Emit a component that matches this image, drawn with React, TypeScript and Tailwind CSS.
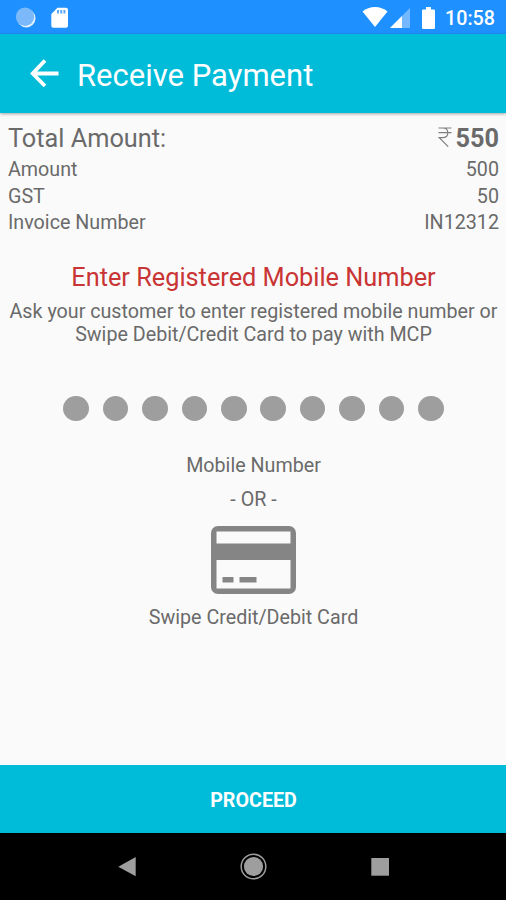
const details = [
  { label: 'Amount', value: '500' },
  { label: 'GST', value: '50' },
  { label: 'Invoice Number', value: 'IN12312' }
]

const MOBILE_LENGTH = 10

function StatusBar() {
  return (
    <div className="h-[34px] shrink-0 bg-[#1e90ff] flex items-center justify-between pl-[15px] pr-[11px]">
      <div className="flex items-center gap-[15px]">
        <svg width="21" height="21" viewBox="0 0 21 21">
          <circle cx="11.3" cy="11.3" r="9.2" fill="#e3f1ff" />
          <circle cx="10" cy="9.8" r="9.2" fill="#7bb9fa" />
        </svg>
        <svg width="18" height="21" viewBox="0 0 18 21">
          <path d="M6.5 0.8H15a2 2 0 0 1 2 2v16a2 2 0 0 1-2 2H2.300a2 2 0 0 1-2-2V7z" fill="#fff" />
          <path d="M6 3h2v3.500H6zM9.200 3h2v3.500h-2zM12.400 3h2v3.500h-2z" fill="#5ba8f5" />
        </svg>
      </div>
      <div className="flex items-center pt-[1px]">
        <svg width="26" height="21" viewBox="0 0 26 21">
          <path d="M13 20 0.500 4.500C4 1.500 8.200 0 13 0s9 1.500 12.500 4.500z" fill="#fff" />
        </svg>
        <svg className="ml-[2px]" width="20" height="20" viewBox="0 0 20 20">
          <path d="M0 20 20 0v20z" fill="#74b9ff" />
          <path d="M0 20 12 8v12z" fill="#fff" />
        </svg>
        <svg className="ml-[12px]" width="13" height="22" viewBox="0 0 13 22">
          <path d="M4 0h5v2.500h2.700A1.300 1.300 0 0 1 13 3.800v16.900a1.300 1.300 0 0 1-1.300 1.300H1.300A1.300 1.300 0 0 1 0 20.700V3.800a1.300 1.300 0 0 1 1.300-1.300H4z" fill="#fff" />
        </svg>
        <span className="ml-[10px] pt-[2px] text-[19.7px] leading-[23px] font-medium text-white">10:58</span>
      </div>
    </div>
  )
}

function Header() {
  return (
    <header className="relative h-[79px] shrink-0 bg-[#00bcd9] flex items-center pl-[30px] shadow-[0_1px_3px_rgba(0,0,0,0.35)]">
      <svg width="29" height="29" viewBox="0 0 29 29" fill="none" stroke="#fff" strokeWidth="3.800">
        <path d="M28.500 14.500H3M15 1.500 2.700 14.500l12.300 12.500" />
      </svg>
      <h1 className="ml-[18px] text-[31px] leading-[36px] pt-[4px] text-white">Receive Payment</h1>
    </header>
  )
}

function CardIcon() {
  return (
    <svg width="85" height="68" viewBox="0 0 85 68">
      <rect width="85" height="68" rx="7" fill="#858585" />
      <path d="M5.500 5.500h74v12h-74zM5.500 34h74v28.500h-74z" fill="#fafafa" />
      <path d="M11.500 51h11v5.500h-11zM28.500 51h17v5.500h-17z" fill="#858585" />
    </svg>
  )
}

function NavBar() {
  return (
    <nav className="h-[67px] shrink-0 bg-black">
      <svg width="506" height="67" viewBox="0 0 506 67" fill="#9e9e9e">
        <path d="M118.300 33.800 135.700 24v19.200z" />
        <circle cx="253.500" cy="33.500" r="12.300" fill="none" stroke="#9e9e9e" strokeWidth="1.500" />
        <circle cx="253.500" cy="33.500" r="9.600" />
        <rect x="371.300" y="25" width="17.700" height="17.700" />
      </svg>
    </nav>
  )
}

export default function App() {
  return (
    <div className="w-[506px] h-[900px] flex flex-col overflow-hidden bg-[#fafafa] font-['Roboto',sans-serif] text-[19.7px] leading-[23px] text-[#6a6a6a]">
      <StatusBar />
      <Header />

      <main className="flex-1 flex flex-col pl-[8px] pr-[7px] pt-[11px]">
        <div className="flex justify-between h-[32px] text-[25.3px] leading-[30px]">
          <span>Total Amount:</span>
          <span className="flex">
            <svg className="mt-[3px] mr-[3px]" width="14" height="20" viewBox="0 0 14 20" fill="none" stroke="#808080" strokeWidth="1.200">
              <path d="M0.500 1h13M0.500 5.600h13M1 1h3.500c3.300 0 5.300 1.800 5.300 4.700s-2 4.900-5.300 4.900H1.200l9 9" />
            </svg>
            <span className="font-bold">550</span>
          </span>
        </div>
        {details.map((item) => (
          <div key={item.label} className="flex justify-between h-[26.6px] leading-[27px]">
            <span>{item.label}</span>
            <span>{item.value}</span>
          </div>
        ))}

        <h2 className="mt-[27px] text-center text-[25.3px] leading-[30px] text-[#c93434]">
          Enter Registered Mobile Number
        </h2>
        <p className="mt-[7px] text-center whitespace-nowrap">
          Ask your customer to enter registered mobile number or
          <br />
          Swipe Debit/Credit Card to pay with MCP
        </p>

        <div className="mt-[50px] flex justify-center gap-[13.9px]">
          {Array.from({ length: MOBILE_LENGTH }).map((_, i) => (
            <span key={i} className="w-[25.5px] h-[25.5px] rounded-full bg-[#9e9e9e]" />
          ))}
        </div>

        <div className="mt-[32.500px] flex flex-col items-center">
          <span>Mobile Number</span>
          <span className="mt-[11px]">- OR -</span>
          <div className="mt-[15px]">
            <CardIcon />
          </div>
          <span className="mt-[12px]">Swipe Credit/Debit Card</span>
        </div>
      </main>

      <button className="h-[68px] pt-[2px] pl-[1px] shrink-0 bg-[#00bcd9] text-white font-bold">PROCEED</button>
      <NavBar />
    </div>
  )
}
